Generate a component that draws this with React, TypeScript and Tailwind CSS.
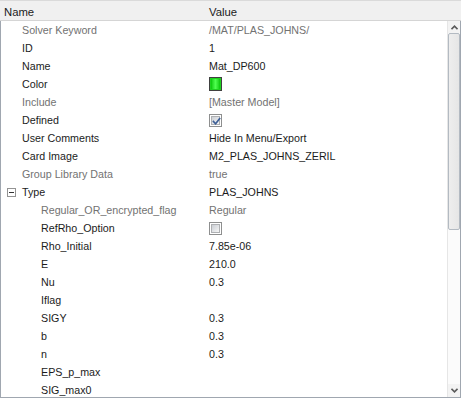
import React from "react";

type Row = {
  name: string;
  value?: string;
  kind?: "text" | "swatch" | "checked" | "unchecked";
  gray?: boolean;
  level?: 0 | 1;
  expander?: boolean;
};

const rows: Row[] = [
  { name: "Solver Keyword", value: "/MAT/PLAS_JOHNS/", gray: true },
  { name: "ID", value: "1" },
  { name: "Name", value: "Mat_DP600" },
  { name: "Color", kind: "swatch" },
  { name: "Include", value: "[Master Model]", gray: true },
  { name: "Defined", kind: "checked" },
  { name: "User Comments", value: "Hide In Menu/Export" },
  { name: "Card Image", value: "M2_PLAS_JOHNS_ZERIL" },
  { name: "Group Library Data", value: "true", gray: true },
  { name: "Type", value: "PLAS_JOHNS", expander: true },
  { name: "Regular_OR_encrypted_flag", value: "Regular", gray: true, level: 1 },
  { name: "RefRho_Option", kind: "unchecked", level: 1 },
  { name: "Rho_Initial", value: "7.85e-06", level: 1 },
  { name: "E", value: "210.0", level: 1 },
  { name: "Nu", value: "0.3", level: 1 },
  { name: "Iflag", value: "", level: 1 },
  { name: "SIGY", value: "0.3", level: 1 },
  { name: "b", value: "0.3", level: 1 },
  { name: "n", value: "0.3", level: 1 },
  { name: "EPS_p_max", value: "", level: 1 },
  { name: "SIG_max0", value: "", level: 1 },
];

function CheckBox({ checked }: { checked: boolean }) {
  return (
    <div className="w-[13px] h-[13px] border border-[#8e8f8f] bg-white p-[1px]">
      <div className="w-full h-full border border-[#aeb0b3] bg-gradient-to-br from-[#cbcfd5] to-[#f6f6f6] relative">
        {checked && (
          <svg viewBox="0 0 9 9" className="absolute inset-0 w-[9px] h-[9px]">
            <path d="M1.5 4.5 L3.6 6.8 L7.6 1.6" stroke="#3d5f96" strokeWidth="1.7" fill="none" strokeLinecap="square" />
          </svg>
        )}
      </div>
    </div>
  );
}

function Swatch() {
  return (
    <div className="w-[13px] h-[14px] border border-[#404040] p-[1px] bg-[#1fd11f]">
      <div className="w-full h-full bg-gradient-to-r from-[#00c800] via-[#4dff4d] to-[#00c800]" />
    </div>
  );
}

function Chevron({ up }: { up: boolean }) {
  return (
    <svg viewBox="0 0 7 5" className="w-[7px] h-[5px]">
      {up ? (
        <path d="M0.5 4.2 L3.5 1.2 L6.5 4.2" stroke="#5a5a5a" strokeWidth="1.6" fill="none" />
      ) : (
        <path d="M0.5 0.8 L3.5 3.8 L6.5 0.8" stroke="#5a5a5a" strokeWidth="1.6" fill="none" />
      )}
    </svg>
  );
}

export default function App() {
  return (
    <div className="w-[461px] h-[399px] bg-white overflow-hidden font-['Liberation_Sans',Arial,sans-serif] text-[#1b1b1b]">
      <div className="h-[21px] bg-[#f0f0f0] border-t border-[#dadada] border-b border-b-[#d5d5d5] flex text-[11.3px] leading-[13px] pt-[5px]">
        <div className="w-[209px] pl-[4px] shrink-0">Name</div>
        <div>Value</div>
      </div>
      <div className="h-[377px] flex border-l border-r border-b border-[#a0a7b0]">
        <div className="flex-1 overflow-hidden text-[10.7px] leading-[13px]">
          {rows.map((r, i) => {
            const pad = r.level === 1 ? "pl-[40px]" : r.expander ? "pl-[6px]" : "pl-[21px]";
            return (
              <div key={i} className="h-[18px] flex items-center">
                <div className={`w-[208px] shrink-0 flex items-center ${pad} ${r.gray ? "text-[#727272]" : ""}`}>
                  {r.expander && (
                    <div className="w-[9px] h-[9px] border border-[#939393] bg-white flex items-center justify-center mr-[6px]">
                      <div className="w-[5px] h-[1px] bg-[#333]" />
                    </div>
                  )}
                  <span className="whitespace-nowrap">{r.name}</span>
                </div>
                <div className={`flex items-center whitespace-nowrap ${r.gray ? "text-[#727272]" : ""}`}>
                  {r.kind === "swatch" ? (
                    <Swatch />
                  ) : r.kind === "checked" ? (
                    <CheckBox checked />
                  ) : r.kind === "unchecked" ? (
                    <CheckBox checked={false} />
                  ) : (
                    r.value
                  )}
                </div>
              </div>
            );
          })}
        </div>
        <div className="w-[13px] shrink-0 bg-[#fbfbfb] border-l border-[#e6e6e6] flex flex-col">
          <div className="h-[12px] flex items-center justify-center bg-[#f3f3f3]">
            <Chevron up />
          </div>
          <div className="h-[197px] border border-[#b3bac2] rounded-[2px] bg-gradient-to-r from-[#eeeeee] to-[#e6e6e6]" />
          <div className="flex-1" />
          <div className="h-[13px] flex items-center justify-center bg-[#f3f3f3]">
            <Chevron up={false} />
          </div>
        </div>
      </div>
    </div>
  );
}
